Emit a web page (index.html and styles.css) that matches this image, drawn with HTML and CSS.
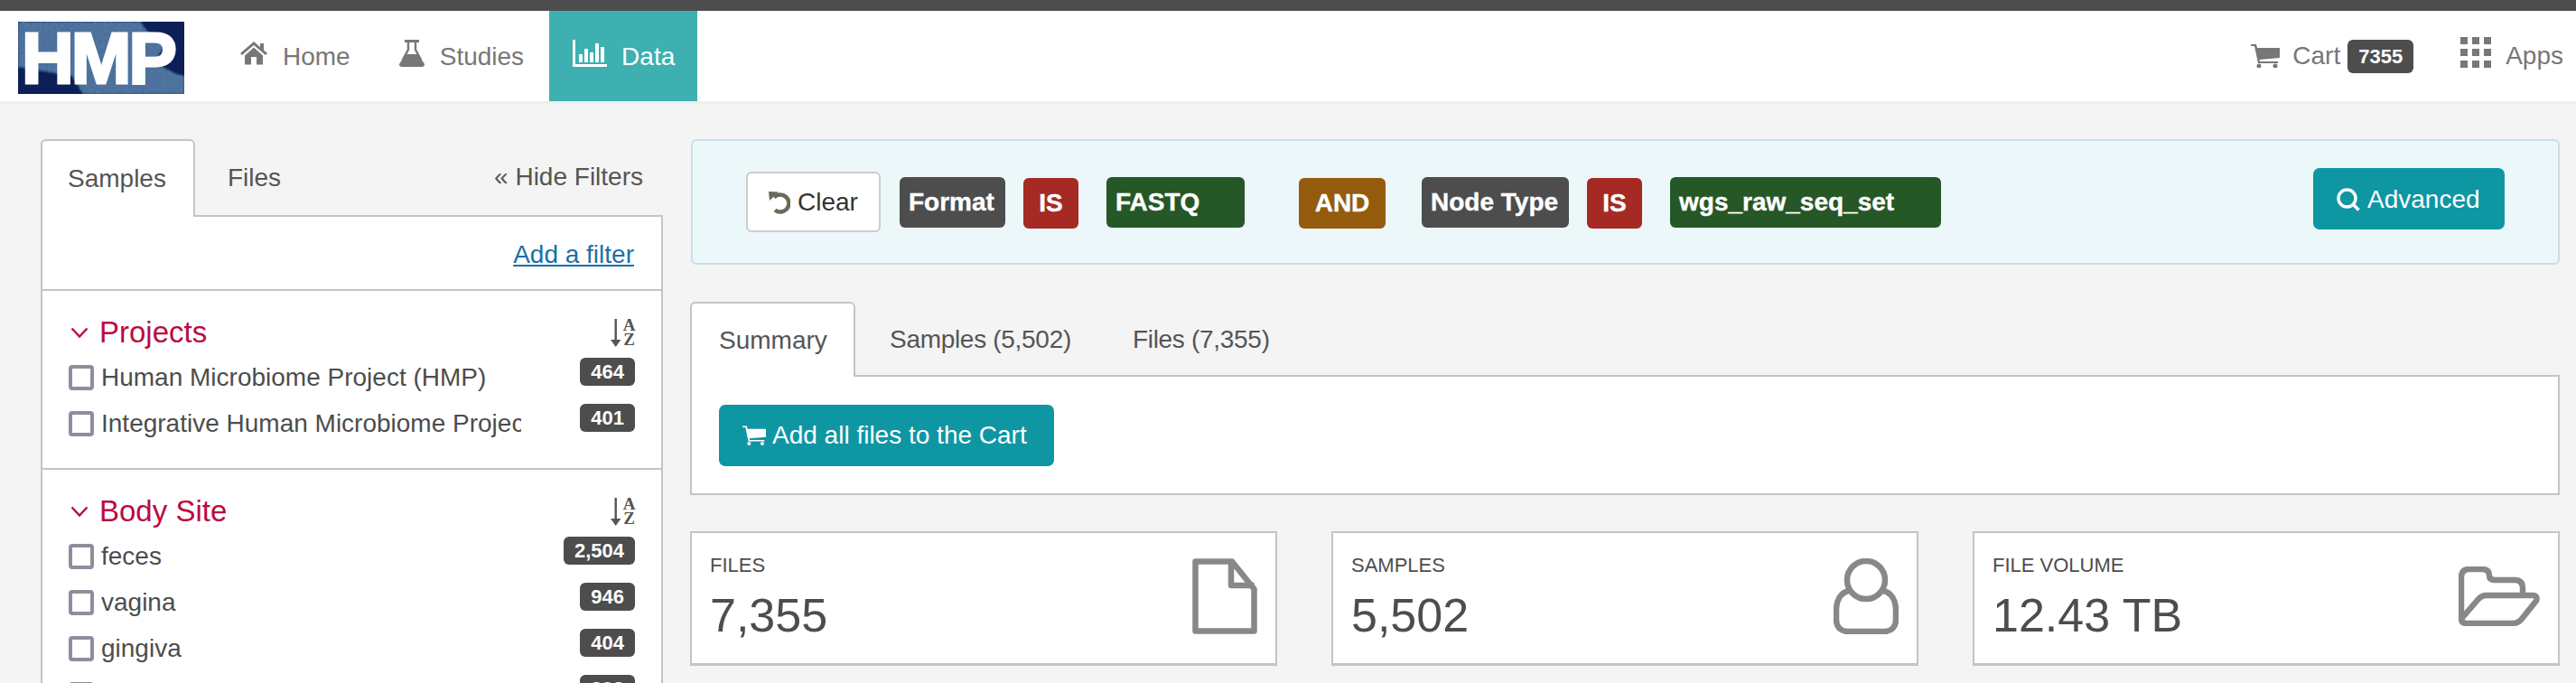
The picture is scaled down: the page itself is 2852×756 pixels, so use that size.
FILE: index.html

```html
<!DOCTYPE html>
<html lang="en">
<head>
  <meta charset="UTF-8" />
  <title>HMP Data</title>
  <link rel="stylesheet" href="styles.css">
</head>
<body>
  <div class="topline"></div>

  <header class="navbar">
    <div class="logo">
      <svg class="logo-bg" viewBox="0 0 184 80" width="184" height="80">
        <defs>
          <filter id="mottle" x="-5%" y="-5%" width="110%" height="110%">
            <feGaussianBlur in="SourceGraphic" stdDeviation="1.2" result="soft" />
            <feTurbulence type="fractalNoise" baseFrequency="0.3" numOctaves="2" seed="4" result="noise" />
            <feColorMatrix in="noise" type="matrix" values="0 0 0 0 0.1  0 0 0 0 0.18  0 0 0 0 0.36  0 0 0 2.2 -0.75" result="spots" />
            <feComposite in="spots" in2="soft" operator="in" result="inside" />
            <feMerge>
              <feMergeNode in="soft" />
              <feMergeNode in="inside" />
            </feMerge>
          </filter>
        </defs>
        <rect width="184" height="80" fill="#0c1f58" />
        <path d="M0 0H135L142 10L165 22L150 45L175 58L184 60V80H72L60 60L0 50Z" fill="#47719b" filter="url(#mottle)" />
      </svg>
      <span class="logo-text">HMP</span>
    </div>

    <nav class="nav-links">
      <a class="nav-link">
        <svg class="icon" viewBox="0 0 30 26" width="30" height="26"><path d="M0 13L15 0L22 6V2H26V9.5L30 13L28 15L15 4L2 15Z" /><path d="M5 15.5L15 6.5L25 15.5V25.5H18V17H12V25.5H5Z" /></svg>
        Home
      </a>
      <a class="nav-link">
        <svg class="icon" viewBox="0 0 28 30" width="28" height="30"><rect x="6" y="0" width="16" height="3" /><path class="icon-line" d="M10 2V11L4 22M18 2V11L24 22" /><path d="M7 16H21L28 27Q28 30 25 30H3Q0 30 0 27Z" /></svg>
        Studies
      </a>
      <a class="nav-link nav-link-active">
        <svg class="icon" viewBox="0 0 38 30" width="38" height="30"><rect x="0" y="0" width="3" height="30" /><rect x="0" y="27" width="38" height="3" /><rect x="7" y="16" width="4" height="9" /><rect x="13" y="10" width="4" height="15" /><rect x="19" y="14" width="4" height="11" /><rect x="25" y="4" width="4" height="21" /><rect x="31" y="8" width="4" height="17" /></svg>
        Data
      </a>
    </nav>

    <div class="nav-right">
      <a class="nav-cart">
        <svg class="icon" viewBox="0 0 32 26" width="32" height="26"><path d="M0 0H6L7 4H32V15L9.5 17L10 19H30V21H8L4 2H0Z" /><circle cx="9" cy="24" r="2.5" /><circle cx="27" cy="24" r="2.5" /></svg>
        <span class="cart-word">Cart</span>
        <span class="cart-badge">7355</span>
      </a>
      <a class="nav-apps">
        <svg class="icon" viewBox="0 0 34 34" width="34" height="34"><rect x="0" y="0" width="8" height="8" /><rect x="13" y="0" width="8" height="8" /><rect x="26" y="0" width="8" height="8" /><rect x="0" y="13" width="8" height="8" /><rect x="13" y="13" width="8" height="8" /><rect x="26" y="13" width="8" height="8" /><rect x="0" y="26" width="8" height="8" /><rect x="13" y="26" width="8" height="8" /><rect x="26" y="26" width="8" height="8" /></svg>
        Apps
      </a>
    </div>
  </header>

  <div class="layout">
    <aside class="sidebar">
      <div class="side-tabs">
        <a class="side-tab side-tab-active">Samples</a>
        <a class="side-tab">Files</a>
        <a class="hide-filters">« Hide Filters</a>
      </div>

      <div class="filter-panel">
        <div class="add-filter"><a>Add a filter</a></div>

        <section class="facet">
          <div class="facet-head">
            <svg class="chevron" viewBox="0 0 20 12" width="20" height="12"><path d="M1.5 1.5L10 10.5L18.5 1.5" /></svg>
            <h3 class="facet-title">Projects</h3>
            <div class="sort-icon">
              <svg viewBox="0 0 12 31" width="12" height="31"><rect x="4.5" y="0" width="2.4" height="26" /><path d="M0 23H11.4L5.7 31Z" /></svg>
              <div class="sort-letters"><span>A</span><span>Z</span></div>
            </div>
          </div>
          <div class="facet-row">
            <span class="check"></span>
            <span class="row-label">Human Microbiome Project (HMP)</span>
            <span class="count">464</span>
          </div>
          <div class="facet-row">
            <span class="check"></span>
            <span class="row-label">Integrative Human Microbiome Project</span>
            <span class="count">401</span>
          </div>
        </section>

        <section class="facet">
          <div class="facet-head">
            <svg class="chevron" viewBox="0 0 20 12" width="20" height="12"><path d="M1.5 1.5L10 10.5L18.5 1.5" /></svg>
            <h3 class="facet-title">Body Site</h3>
            <div class="sort-icon">
              <svg viewBox="0 0 12 31" width="12" height="31"><rect x="4.5" y="0" width="2.4" height="26" /><path d="M0 23H11.4L5.7 31Z" /></svg>
              <div class="sort-letters"><span>A</span><span>Z</span></div>
            </div>
          </div>
          <div class="facet-row">
            <span class="check"></span>
            <span class="row-label">feces</span>
            <span class="count">2,504</span>
          </div>
          <div class="facet-row">
            <span class="check"></span>
            <span class="row-label">vagina</span>
            <span class="count">946</span>
          </div>
          <div class="facet-row">
            <span class="check"></span>
            <span class="row-label">gingiva</span>
            <span class="count">404</span>
          </div>
          <div class="facet-row">
            <span class="check"></span>
            <span class="row-label"></span>
            <span class="count">393</span>
          </div>
        </section>
      </div>
    </aside>

    <main class="content">
      <div class="query-box">
        <button class="btn-clear">
          <svg class="undo-icon" viewBox="0 0 24 26" width="24" height="26"><path class="undo-arc" d="M6 7.5A9.5 9.5 0 1 1 7 21.5" /><path class="undo-head" d="M0 1L11 1.5L1 11Z" /></svg>
          Clear
        </button>
        <span class="chip chip-field chip-format">Format</span>
        <span class="chip chip-op">IS</span>
        <span class="chip chip-value chip-fastq">FASTQ</span>
        <span class="chip chip-and">AND</span>
        <span class="chip chip-field chip-node">Node Type</span>
        <span class="chip chip-op">IS</span>
        <span class="chip chip-value chip-seqset">wgs_raw_seq_set</span>
        <button class="btn-teal btn-advanced">
          <svg class="search-icon" viewBox="0 0 26 26" width="26" height="26"><circle cx="11.5" cy="11.5" r="9.5" /><path d="M18 18L24.5 24.5" /></svg>
          Advanced
        </button>
      </div>

      <div class="main-tabs">
        <a class="main-tab main-tab-active">Summary</a>
        <a class="main-tab">Samples (5,502)</a>
        <a class="main-tab">Files (7,355)</a>
      </div>
      <div class="tab-panel">
        <button class="btn-teal btn-addall">
          <svg class="cart-icon-white" viewBox="0 0 32 26" width="26" height="22"><path d="M0 0H6L7 4H32V15L9.5 17L10 19H30V21H8L4 2H0Z" /><circle cx="9" cy="24" r="2.5" /><circle cx="27" cy="24" r="2.5" /></svg>
          Add all files to the Cart
        </button>
      </div>

      <div class="stat-grid">
        <div class="stat-card">
          <div>
            <div class="stat-label">FILES</div>
            <div class="stat-value">7,355</div>
          </div>
          <svg class="stat-icon" viewBox="0 0 72 84" width="72" height="84"><path d="M3.5 3.5H44L68.5 34V80.5H3.5Z" /><path d="M43 3.5V30H68.5" /></svg>
        </div>
        <div class="stat-card">
          <div>
            <div class="stat-label">SAMPLES</div>
            <div class="stat-value">5,502</div>
          </div>
          <svg class="stat-icon" viewBox="0 0 72 84" width="72" height="84"><circle cx="36" cy="24" r="21" /><path d="M17 36C8 38 3 46 3 58V68C3 76 8 81 16 81H56C64 81 69 76 69 68V58C69 46 64 38 55 36" /></svg>
        </div>
        <div class="stat-card">
          <div>
            <div class="stat-label">FILE VOLUME</div>
            <div class="stat-value">12.43 TB</div>
          </div>
          <svg class="stat-icon" viewBox="0 0 90 66" width="90" height="66"><path d="M3 58V12Q3 3 12 3H26Q34 3 34 10Q34 15 40 15H62Q71 15 71 24V30" /><path d="M3 58L22 36Q26 32 30 32H82Q88 32 86 38L70 58Q66 63 60 63H10Q3 63 3 58Z" /></svg>
        </div>
      </div>
    </main>
  </div>
</body>
</html>
```

FILE: styles.css

```css
* {
  box-sizing: border-box;
}

html, body {
  height: 100%;
}

body {
  margin: 0;
  overflow: hidden;
  background: #f4f4f4;
  color: #555;
  font-family: "Liberation Sans", Arial, sans-serif;
  font-size: 28px;
}

.topline {
  height: 12px;
  background: #4d4d4d;
}

/* top nav */
.navbar {
  display: flex;
  align-items: stretch;
  height: 103px;
  padding: 0 14px 0 20px;
  background: #fff;
  border-bottom: 3px solid #eeeeee;
}

.logo {
  position: relative;
  flex-shrink: 0;
  width: 184px;
  height: 80px;
  margin-top: 12px;
  padding-left: 4px;
}

.logo-bg {
  position: absolute;
  left: 0;
  top: 0;
}

.logo-text {
  position: relative;
  display: block;
  margin-top: 2px;
  color: #fff;
  font-size: 80px;
  font-weight: bold;
  line-height: 78px;
  letter-spacing: -3px;
  -webkit-text-stroke: 3px #fff;
}

.icon {
  fill: #777;
  flex-shrink: 0;
}

.icon-line {
  fill: none;
  stroke: #777;
  stroke-width: 2.4;
}

.nav-links {
  display: flex;
  gap: 2px;
  margin-left: 36px;
}

.nav-link {
  display: flex;
  align-items: center;
  gap: 17px;
  padding: 2px 26px 0;
  color: #777;
}

.nav-link .icon {
  margin-top: -8px;
}

.nav-link-active {
  gap: 16px;
  padding-right: 25px;
  background: #3eb0b1;
  color: #fff;
}

.nav-link-active .icon {
  fill: #fff;
}

.nav-right {
  display: flex;
  align-items: center;
  gap: 52px;
  margin-left: auto;
  color: #777;
}

.nav-cart, .nav-apps {
  display: flex;
  align-items: center;
}

.nav-cart .icon {
  margin-right: 14px;
}

.cart-word {
  margin-right: 8px;
}

.cart-badge {
  padding: 0 12px;
  height: 37px;
  line-height: 37px;
  border-radius: 6px;
  background: #4d4d4d;
  color: #fff;
  font-size: 22px;
  font-weight: bold;
}

.nav-apps .icon {
  margin: -8px 16px 0 0;
}

/* page */
.layout {
  display: flex;
  height: 641px;
  overflow: hidden;
  padding: 39px 18px 0 45px;
}

.sidebar {
  width: 689px;
  flex-shrink: 0;
}

.side-tabs {
  display: flex;
  align-items: center;
  height: 86px;
  border-bottom: 2px solid #c4c4c4;
}

.side-tab {
  display: flex;
  align-items: center;
  height: 86px;
  padding: 0 28px;
  margin-bottom: -2px;
  margin-left: 8px;
  color: #555;
}

.side-tab-active {
  margin-left: 0;
  background: #fff;
  border: 2px solid #c4c4c4;
  border-bottom: none;
  border-radius: 6px 6px 0 0;
  width: 171px;
}

.hide-filters {
  margin-left: auto;
  padding-right: 22px;
}

.filter-panel {
  background: #fff;
  border-left: 2px solid #c4c4c4;
  border-right: 2px solid #c4c4c4;
}

.add-filter {
  display: flex;
  align-items: center;
  justify-content: flex-end;
  height: 82px;
  padding: 4px 30px 0 0;
  border-bottom: 2px solid #c4c4c4;
}

.add-filter a {
  color: #1a6fa8;
  text-decoration: underline;
}

.facet {
  padding: 30px 29px 20px;
  border-bottom: 2px solid #c4c4c4;
}

.facet-head {
  display: flex;
  align-items: center;
  height: 32px;
  margin-bottom: 12px;
}

.chevron {
  margin: 0 0 0 2px;
  fill: none;
  stroke: #bb0a3f;
  stroke-width: 2.4;
}

.facet-title {
  margin: 0 0 0 12px;
  color: #bb0a3f;
  font-size: 33px;
  font-weight: normal;
}

.sort-icon {
  display: flex;
  align-items: center;
  gap: 2px;
  margin-left: auto;
  fill: #555;
}

.sort-letters {
  display: flex;
  flex-direction: column;
  width: 13px;
  align-items: center;
  color: #555;
  font-family: "Liberation Serif", serif;
  font-size: 19px;
  font-weight: bold;
  line-height: 16px;
}

.facet-row {
  display: flex;
  align-items: flex-start;
  height: 51px;
}

.check {
  width: 28px;
  height: 28px;
  margin-top: 8px;
  flex-shrink: 0;
  background: #fff;
  border: 4px solid #8e8e9e;
  border-radius: 4px;
}

.row-label {
  width: 465px;
  margin-left: 8px;
  line-height: 44px;
  white-space: nowrap;
  overflow: hidden;
  color: #4d4d4d;
}

.count {
  margin-left: auto;
  padding: 0 12px;
  height: 31px;
  line-height: 31px;
  border-radius: 6px;
  background: #4d4d4d;
  color: #fff;
  font-size: 22px;
  font-weight: bold;
}

/* right side */
.content {
  flex: 1;
  margin-left: 30px;
  min-width: 0;
}

.query-box {
  display: flex;
  align-items: center;
  gap: 20px;
  height: 139px;
  margin-left: 1px;
  padding: 0 59px;
  background: #ecf7fa;
  border: 2px solid #c9dee5;
  border-radius: 6px;
}

.btn-clear {
  display: flex;
  align-items: center;
  justify-content: center;
  gap: 8px;
  width: 149px;
  height: 67px;
  margin-right: 1px;
  padding: 0;
  background: #fff;
  border: 2px solid #ccc;
  border-radius: 6px;
  color: #333;
  font: inherit;
}

.undo-arc {
  fill: none;
  stroke: #6b6b5a;
  stroke-width: 4.5;
}

.undo-head {
  fill: #6b6b5a;
}

.chip {
  display: flex;
  align-items: center;
  height: 56px;
  padding: 0 10px;
  border-radius: 6px;
  color: #fff;
  font-weight: bold;
  white-space: nowrap;
  -webkit-text-stroke: 0.4px #fff;
}

.chip-field {
  background: #4d4d4d;
}

.chip-format {
  width: 117px;
}

.chip-node {
  width: 163px;
}

.chip-op {
  justify-content: center;
  width: 61px;
  margin-top: 3px;
  padding: 0;
  background: #a52a24;
}

.chip-value {
  margin-left: 11px;
  background: #265726;
}

.chip-fastq {
  margin-right: 40px;
  width: 153px;
}

.chip-seqset {
  width: 300px;
}

.chip-and {
  justify-content: center;
  width: 96px;
  margin: 3px 20px 0 0;
  padding: 0;
  background: #955b0d;
}

.btn-teal {
  display: flex;
  align-items: center;
  height: 68px;
  background: #0f96a3;
  border: none;
  border-radius: 7px;
  color: #fff;
  font: inherit;
}

.btn-advanced {
  gap: 8px;
  margin: -7px 0 0 auto;
  padding: 2px 26px 0;
  width: 212px;
}

.search-icon {
  fill: none;
  stroke: #fff;
  stroke-width: 3.4;
}

.main-tabs {
  display: flex;
  height: 83px;
  margin-top: 41px;
  border-bottom: 2px solid #c4c4c4;
}

.main-tab {
  display: flex;
  align-items: center;
  height: 83px;
  margin-left: 8px;
  padding: 1px 30px 0;
  letter-spacing: -0.3px;
  color: #555;
}

.main-tab-active {
  width: 183px;
  margin-left: 0;
  background: #fff;
  border: 2px solid #c4c4c4;
  border-bottom: none;
  border-radius: 6px 6px 0 0;
  letter-spacing: 0;
}

.tab-panel {
  padding: 31px 30px 30px;
  background: #fff;
  border: 2px solid #c4c4c4;
  border-top: none;
}

.btn-addall {
  gap: 7px;
  padding: 0 26px;
  width: 371px;
}

.cart-icon-white {
  fill: #fff;
}

.stat-grid {
  display: grid;
  grid-template-columns: repeat(3, 1fr);
  gap: 60px;
  margin-top: 40px;
}

.stat-card {
  display: flex;
  align-items: flex-start;
  justify-content: space-between;
  height: 149px;
  padding: 21px 20px 0;
  background: #fff;
  border: 2px solid #c4c4c4;
  border-bottom-width: 3px;
}

.stat-label {
  height: 30px;
  line-height: 30px;
  font-size: 22px;
  color: #4d4d4d;
}

.stat-value {
  height: 60px;
  margin-top: 10px;
  line-height: 60px;
  font-size: 52px;
  color: #4d4d4d;
}

.stat-icon {
  align-self: center;
  margin: -26px 0 0 0;
  fill: none;
  stroke: #888;
  stroke-width: 6.5;
  stroke-linejoin: round;
}
```
